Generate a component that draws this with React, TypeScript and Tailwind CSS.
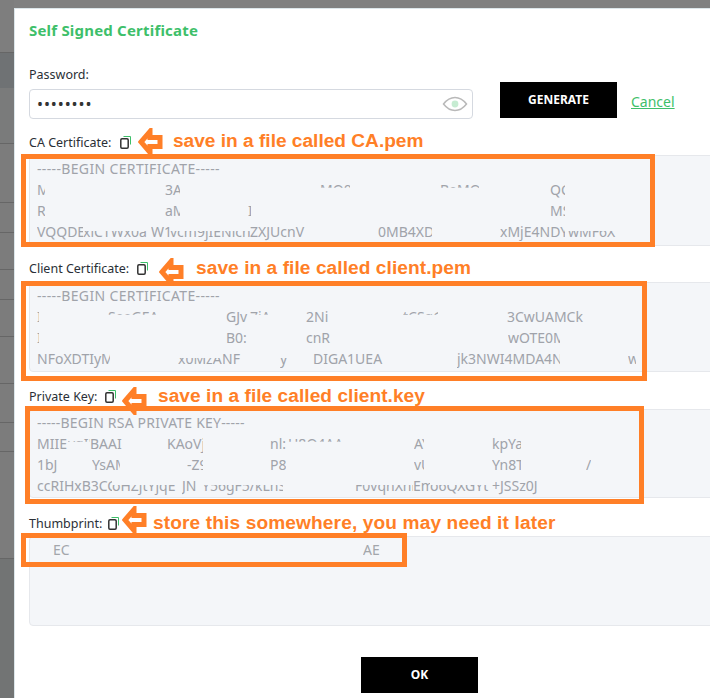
const ui = "font-['Noto_Sans',sans-serif]";
const note = "font-['Liberation_Sans',Arial,sans-serif] font-bold text-[19.1px] leading-[22px] text-[#ff7f27] whitespace-nowrap";

// table rows showing behind the dialog
const backdropRows = [
  "h-[53px] border-b border-[#666] bg-[#7e7e7e]",
  "h-[35px] bg-[#6f7274]",
  "h-[56px] border-b border-[#666] bg-[#7a7b7b]",
  "h-[59px] border-b border-[#666] bg-[#7c7c7c]",
  "h-[30px] border-b border-[#666] bg-[#7c7c7c]",
  "h-[37px] border-b border-[#666] bg-[#7c7c7c]",
  "h-[30px] border-b border-[#666] bg-[#7c7c7c]",
  "h-[37px] border-b border-[#666] bg-[#7c7c7c]",
  "h-[47px] border-b border-[#666] bg-[#7c7c7c]",
  "h-[39px] border-b border-[#666] bg-[#7c7c7c]",
  "h-[29px] border-b border-[#666] bg-[#7c7c7c]",
  "h-[107px] border-b border-[#666] bg-[#7c7c7c]",
  "h-[140px] bg-[#727474]",
];

function CopyIcon() {
  return (
    <svg viewBox="0 0 11 13" className="h-[13px] w-[11px] shrink-0" fill="none">
      <path d="M3.5 0.5h7v8" stroke="#3ebf6a" strokeWidth="1" />
      <rect x="0.8" y="2.8" width="7.4" height="9.4" rx="1.2" stroke="#333" strokeWidth="1.5" />
    </svg>
  );
}

function Arrow({ className }: { className: string }) {
  return (
    <svg viewBox="0 0 25 28" className={`absolute h-[28px] w-[25px] ${className}`}>
      <polygon points="3,14 12,3.5 12,9.5 22,9.5 22,18.5 12,18.5 12,24.5" fill="#fff" stroke="#ff7f27" strokeWidth="5" />
    </svg>
  );
}

function Label({ text, icon }: { text: string; icon: string }) {
  return (
    <div className={`flex h-[18px] items-center text-[12.5px] text-[#2a2f36] ${icon}`}>
      <span className="pt-[2px]">{text}</span>
      <CopyIcon />
    </div>
  );
}

function Frag({ className, children }: { className: string; children: string }) {
  return <span className={`shrink-0 overflow-hidden whitespace-nowrap ${className}`}>{children}</span>;
}

function Line({ children }: { children: React.ReactNode }) {
  return <div className="flex h-[21px] items-center">{children}</div>;
}

const cut = "[clip-path:inset(0_0_58%_0)]";
const low = "[clip-path:inset(48%_0_0_0)]";

export default function App() {
  return (
    <div className={`flex h-[698px] w-[710px] overflow-hidden bg-[#808080] ${ui}`}>
      <div className="w-[14px] shrink-0">
        {backdropRows.map((row, i) => (
          <div key={i} className={row} />
        ))}
      </div>
      <div className="relative mt-[8px] h-[700px] w-[720px] shrink-0 border-l border-t border-[#dce6ea] bg-white pl-[14px] pr-[6px]">
        <h2 className="pt-[10px] text-[15px] font-bold leading-[22px] tracking-[0.2px] text-[#3ebf6a]">Self Signed Certificate</h2>

        <div className="mt-[24px] flex items-start">
          <div className="w-[444px]">
            <div className="pt-[1px] text-[12.5px] leading-[18px] text-[#2a2f36]">Password:</div>
            <div className="mt-[5px] flex h-[30px] items-center justify-between rounded-[4px] border border-[#d5d9e0] pl-[7px] pr-[4px]">
              <span className="text-[16px] leading-none tracking-[0.9px] text-[#333]">••••••••</span>
              <svg viewBox="0 0 26 16" className="h-[16px] w-[26px]" fill="none">
                <path d="M1.5 8C5 3.5 9 1.5 13 1.5S21 3.5 24.5 8C21 12.5 17 14.5 13 14.5S5 12.5 1.5 8Z" stroke="#b9b9b9" strokeWidth="1.5" />
                <circle cx="13" cy="8" r="3.4" fill="#c6ecd2" />
              </svg>
            </div>
          </div>
          <button className="ml-[27px] mt-[17px] h-[36px] w-[117px] bg-black text-[12px] font-bold text-white">GENERATE</button>
          <a className="ml-[14px] mt-[28px] text-[14px] leading-[18px] text-[#3ebf6a] underline">Cancel</a>
        </div>

        <div className="mt-[14px]">
          <Label text="CA Certificate:" icon="gap-[9px]" />
          <div className="mt-[4px] h-[91px] rounded-[4px] border border-[#e6e8ec] bg-[#f4f6f9] pl-[7px] pt-[2px] text-[14px] text-[#a0a3aa]">
            <Line><Frag className="tracking-[0.35px]">-----BEGIN CERTIFICATE-----</Frag></Line>
            <Line>
              <Frag className="w-[8px]">M</Frag>
              <Frag className="ml-[120px] w-[15px]">3A</Frag>
              <Frag className={`ml-[140px] w-[30px] ${cut}`}>MQ0</Frag>
              <Frag className={`ml-[90px] w-[39px] ${cut}`}>BeMQ</Frag>
              <Frag className="ml-[71px] w-[15px]">QC</Frag>
            </Line>
            <Line>
              <Frag className="w-[8px]">R</Frag>
              <Frag className="ml-[120px] w-[15px]">aM</Frag>
              <Frag className="ml-[68px] w-[3px]">I</Frag>
              <Frag className="ml-[299px] w-[15px]">MS</Frag>
            </Line>
            <Line>
              <Frag className="w-[46px]">VQQDE</Frag>
              <Frag className={`w-[68px] ${low}`}>xlCTWx0a</Frag>
              <Frag className="w-[19px]">W1</Frag>
              <Frag className={`w-[80px] ${low}`}>vcm9jIENlcn</Frag>
              <Frag className="w-[60px]">ZXJUcnV</Frag>
              <Frag className="ml-[68px] w-[54px]">0MB4XD</Frag>
              <Frag className="ml-[68px] w-[65px]">xMjE4NDY</Frag>
              <Frag className={`ml-[3px] w-[50px] ${low}`}>wMF6X</Frag>
            </Line>
          </div>
        </div>

        <div className="mt-[13px]">
          <Label text="Client Certificate:" icon="gap-[8px]" />
          <div className="mt-[5px] h-[90px] rounded-[4px] border border-[#e6e8ec] bg-[#f4f6f9] pl-[7px] pt-[2px] text-[14px] text-[#a0a3aa]">
            <Line><Frag className="tracking-[0.35px]">-----BEGIN CERTIFICATE-----</Frag></Line>
            <Line>
              <Frag className="w-[2px]">I</Frag>
              <Frag className={`ml-[69px] w-[50px] ${cut}`}>SeeGEA</Frag>
              <Frag className="ml-[68px] w-[24px]">GJv</Frag>
              <Frag className={`w-[25px] ${cut}`}>7iA</Frag>
              <Frag className="ml-[31px] w-[27px]">2Ni</Frag>
              <Frag className={`ml-[70px] w-[35px] ${cut}`}>tCSqG</Frag>
              <Frag className="ml-[69px] w-[83px]">3CwUAMCk</Frag>
            </Line>
            <Line>
              <Frag className="w-[2px]">I</Frag>
              <Frag className="ml-[187px] w-[24px]">B0:</Frag>
              <Frag className="ml-[56px] w-[27px]">cnR</Frag>
              <Frag className="ml-[175px] w-[52px]">wOTE0M</Frag>
            </Line>
            <Line>
              <Frag className="w-[73px]">NFoXDTIyM</Frag>
              <Frag className={`ml-[68px] w-[44px] ${low}`}>x0MzAw</Frag>
              <Frag className="w-[21px]">NF</Frag>
              <Frag className={`ml-[37px] w-[8px] ${low}`}>y</Frag>
              <Frag className="ml-[25px] w-[75px]">DIGA1UEA</Frag>
              <Frag className="ml-[69px] w-[103px]">jk3NWI4MDA4N</Frag>
              <Frag className="ml-[68px] w-[8px]">w</Frag>
            </Line>
          </div>
        </div>

        <div className="mt-[15px]">
          <Label text="Private Key:" icon="gap-[8px]" />
          <div className="mt-[4px] h-[89px] rounded-[4px] border border-[#e6e8ec] bg-[#f4f6f9] pl-[7px] pt-[2px] text-[14px] text-[#a0a3aa]">
            <Line><Frag className="tracking-[0.2px]">-----BEGIN RSA PRIVATE KEY-----</Frag></Line>
            <Line>
              <Frag className="w-[31px]">MIIE</Frag>
              <Frag className={`w-[22px] ${cut}`}>vgIB</Frag>
              <Frag className="w-[32px]">BAAI</Frag>
              <Frag className="ml-[45px] w-[36px]">KAoVj</Frag>
              <Frag className="ml-[67px] w-[18px]">nl:</Frag>
              <Frag className={`w-[54px] ${cut}`}>H8Q4AA</Frag>
              <Frag className="ml-[72px] w-[10px]">AY</Frag>
              <Frag className="ml-[68px] w-[29px]">kpYa</Frag>
            </Line>
            <Line>
              <Frag className="w-[23px]">1bJ</Frag>
              <Frag className="ml-[32px] w-[28px]">YsAM</Frag>
              <Frag className="ml-[67px] w-[16px]">-Z9</Frag>
              <Frag className="ml-[67px] w-[16px]">P8</Frag>
              <Frag className="ml-[128px] w-[10px]">vU</Frag>
              <Frag className="ml-[68px] w-[29px]">Yn8T</Frag>
              <Frag className="ml-[65px] w-[5px]">/</Frag>
            </Line>
            <Line>
              <Frag className="w-[75px]">ccRIHxB3CC</Frag>
              <Frag className={`w-[70px] ${low}`}>oHZjtYjqE</Frag>
              <Frag className="w-[20px]">JN</Frag>
              <Frag className={`w-[81px] ${low}`}>Y56gF5/kLhS</Frag>
              <Frag className={`ml-[72px] w-[58px] ${low}`}>F0vqhXhl</Frag>
              <Frag className="w-[17px]">Em</Frag>
              <Frag className={`w-[62px] ${low}`}>o6QXGYt</Frag>
              <Frag className="w-[60px]">+JSSz0J</Frag>
            </Line>
          </div>
        </div>

        <div className="mt-[16px]">
          <Label text="Thumbprint:" icon="gap-[6px]" />
          <div className="mt-[4px] h-[90px] rounded-[4px] border border-[#e6e8ec] bg-[#f4f6f9] pl-[23px] pt-[2px] text-[14px] text-[#a3a6ab]">
            <Line>
              <Frag className="w-[19px]">EC</Frag>
              <Frag className="ml-[291px] w-[17px]">AE</Frag>
            </Line>
          </div>
        </div>

        <div className="mt-[31px] flex">
          <button className="ml-[332px] h-[36px] w-[117px] bg-black text-[12px] font-bold text-white">OK</button>
        </div>

        <div className="absolute left-[6px] top-[145px] h-[93px] w-[634px] border-[5px] border-[#ff7f27]" />
        <div className="absolute left-[6px] top-[272px] h-[100px] w-[626px] border-[5px] border-[#ff7f27]" />
        <div className="absolute left-[10px] top-[397px] h-[98px] w-[619px] border-[5px] border-[#ff7f27]" />
        <div className="absolute left-[6px] top-[524px] h-[34px] w-[386px] border-[5px] border-[#ff7f27]" />

        <Arrow className="left-[123px] top-[119px]" />
        <Arrow className="left-[144px] top-[249px]" />
        <Arrow className="left-[107px] top-[378px]" />
        <Arrow className="left-[107px] top-[497px]" />

        <span className={`absolute left-[158px] top-[121px] ${note}`}>save in a file called CA.pem</span>
        <span className={`absolute left-[181px] top-[248px] tracking-[0.07px] ${note}`}>save in a file called client.pem</span>
        <span className={`absolute left-[143px] top-[376px] tracking-[0.05px] ${note}`}>save in a file called client.key</span>
        <span className={`absolute left-[138px] top-[503px] tracking-[0.13px] ${note}`}>store this somewhere, you may need it later</span>
      </div>
    </div>
  );
}
